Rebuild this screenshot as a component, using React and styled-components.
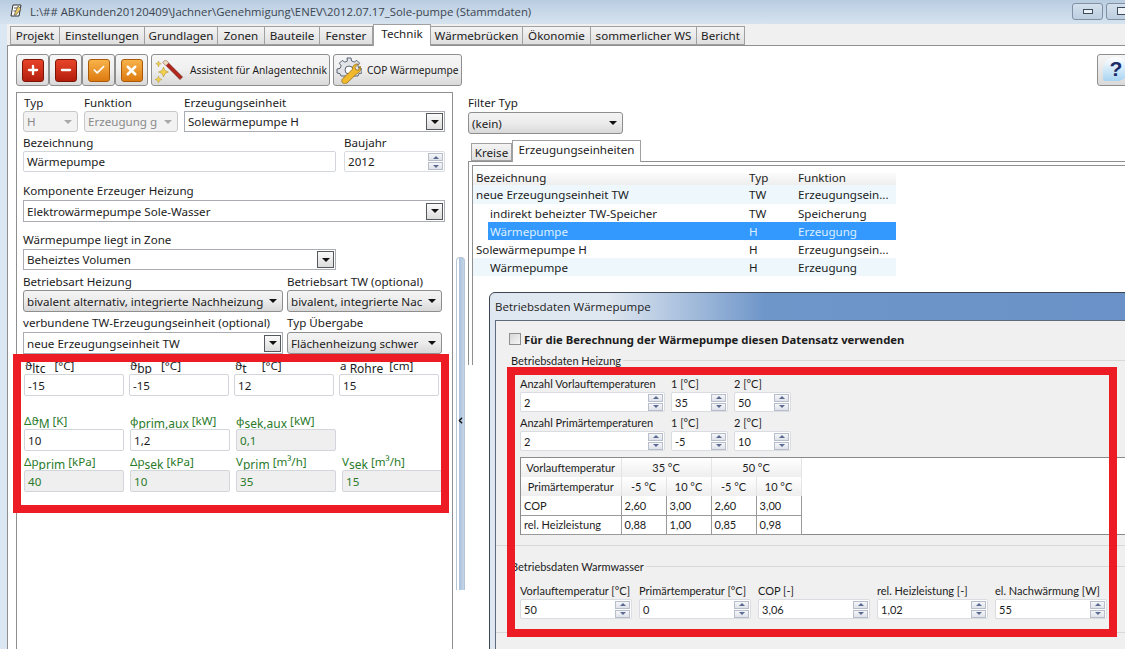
import React from "react";
import styled, { createGlobalStyle } from "styled-components";
import { Plus, Minus, Check, X, ChevronLeft } from "lucide-react";

const GlobalStyle = createGlobalStyle`
  html, body {
    margin: 0;
    padding: 0;
    background: #fff;
  }
  * {
    box-sizing: border-box;
  }
`;

const Screen = styled.div`
  width: 1125px;
  height: 649px;
  position: relative;
  overflow: hidden;
  display: flex;
  flex-direction: column;
  background: #dbe7f3;
  color: #1c1c1c;
  font-family: "Noto Sans", "DejaVu Sans", sans-serif;
  font-size: 11.6px;
`;

const TitleBar = styled.div`
  height: 24px;
  flex: none;
  display: flex;
  align-items: center;
  padding: 0 0 2px 10px;
  gap: 8px;
  background: linear-gradient(#b9cde0, #d6e3ef);
  color: #3c4652;
  font-family: "Open Sans", sans-serif;
  font-size: 11.35px;
`;

const WindowButtons = styled.div`
  margin-left: auto;
  margin-right: -12px;
  display: flex;
  gap: 3px;
`;

const WindowButton = styled.div`
  width: 31px;
  height: 17px;
  display: flex;
  align-items: center;
  justify-content: center;
  border: 1px solid #8091a6;
  border-radius: 3px;
  background: linear-gradient(#d5e0ec, #bccee0);
`;

const WindowGlyph = styled.span`
  width: 10px;
  height: ${p => p.$h}px;
  border: 1px solid #3d4a5a;
  background: #eef3f8;
`;

const TabStrip = styled.div`
  height: 22px;
  flex: none;
  margin-left: 7px;
  padding-left: 3px;
  display: flex;
  align-items: flex-end;
  background: #f0f0f0;
  border-bottom: 1px solid #8f8f8f;
`;

const MainTab = styled.div`
  width: ${p => p.$w}px;
  height: ${p => (p.$active ? 22 : 19)}px;
  margin-bottom: ${p => (p.$active ? -1 : 0)}px;
  display: flex;
  align-items: center;
  justify-content: center;
  border: 1px solid #a0a0a0;
  border-bottom: ${p => (p.$active ? "none" : "1px solid #a0a0a0")};
  border-left-width: ${p => (p.$active ? 1 : 0)}px;
  background: ${p => (p.$active ? "#fff" : "linear-gradient(#f4f4f4, #dfdfdf)")};
  padding-bottom: ${p => (p.$active ? 4 : 0)}px;
  position: relative;
  z-index: ${p => (p.$active ? 1 : 0)};

  &:first-child {
    border-left-width: 1px;
  }
`;

const Page = styled.div`
  flex: 1;
  min-height: 0;
  margin-left: 7px;
  padding-top: 8px;
  background: #fff;
  border-left: 1px solid #8f8f8f;
`;

const Toolbar = styled.div`
  height: 32px;
  padding-left: 8px;
  display: flex;
  align-items: stretch;
`;

const ToolButton = styled.div`
  width: ${p => p.$w}px;
  margin-left: ${p => p.$push || 0}px;
  flex: none;
  display: flex;
  align-items: center;
  justify-content: ${p => (p.$center ? "center" : "flex-start")};
  gap: 5px;
  padding-left: ${p => (p.$center ? 0 : 2)}px;
  border: 1px solid #8e8e8e;
  border-radius: 3px;
  background: linear-gradient(#f6f6f6, #f0f0f0 45%, #d9d9d9);
  font-size: 10.2px;
  white-space: nowrap;

  svg {
    flex: none;
  }
`;

const IconTile = styled.span`
  width: 22px;
  height: 23px;
  display: flex;
  align-items: center;
  justify-content: center;
  border-radius: 3px;
  color: #fff;
  border: 1px solid ${p => (p.$tone === "red" ? "#7c1408" : "#a85a08")};
  background: ${p =>
    p.$tone === "red"
      ? "linear-gradient(#e8452a, #b31d0c)"
      : "linear-gradient(#f7b34a, #dd7a10)"};
`;

const Body = styled.div`
  display: flex;
  height: 600px;
  margin-top: 6px;
  padding-left: 8px;
`;

const LeftPanel = styled.div`
  width: 437px;
  flex: none;
  padding: 3px 0 0 6px;
  border: 1px solid #8f8f8f;
  border-bottom: none;
`;

const Splitter = styled.div`
  width: 9px;
  height: 333px;
  flex: none;
  margin: 165px 0 0 3px;
  padding-top: 158px;
  border: 1px solid #b7c6d6;
  border-bottom: none;
  border-radius: 4px 4px 0 0;
  background: linear-gradient(to right, #fff 30%, #a9c2dc 30%, #c5d6e8);

  svg {
    display: block;
    margin-left: -1px;
  }
`;

const RightPanel = styled.div`
  flex: 1;
  min-width: 0;
  margin-left: 3px;
  padding-top: 4px;
`;

const Row = styled.div`
  display: flex;
  margin-top: ${p => p.$top || 0}px;
  padding-left: ${p => p.$left || 0}px;
  gap: ${p => p.$gap ?? 6}px;
`;

const Field = styled.div`
  width: ${p => p.$w}px;
  flex: none;
  display: flex;
  flex-direction: column;
`;

const Label = styled.div`
  height: ${p => p.$h || 15}px;
  line-height: ${p => (p.$h || 15) - 2}px;
  padding-left: ${p => p.$pad || 0}px;
  white-space: nowrap;
  color: ${p => (p.$green ? "#2a7a2a" : "inherit")};

  sub {
    font-size: 12px;
    line-height: 0;
    vertical-align: -3px;
  }
`;

const Control = styled.div`
  height: ${p => p.$h || 22}px;
  display: flex;
  align-items: center;
  overflow: hidden;
  white-space: nowrap;
  padding-left: 3px;
`;

const ComboBox = styled(Control)`
  background: #fff;
  border: 1px solid #a9adb3;
  justify-content: space-between;
`;

const ArrowBox = styled.span`
  width: 17px;
  height: 17px;
  margin-right: 1px;
  flex: none;
  display: flex;
  align-items: center;
  justify-content: center;
  border: 1px solid #55585c;
  background: linear-gradient(#fafafa, #dcdcdc);
`;

const Caret = styled.span`
  width: 0;
  height: 0;
  flex: none;
  border-left: 4px solid transparent;
  border-right: 4px solid transparent;
  border-top: 4px solid ${p => p.$color || "#111"};
`;

const FlatSelect = styled(Control)`
  border: 1px solid #8e8e8e;
  border-radius: 3px;
  background: linear-gradient(#f4f4f4, #ececec 50%, #d8d8d8);
  justify-content: space-between;
  padding-right: 5px;
`;

const DisabledSelect = styled(Control)`
  border: 1px solid #c8c8c8;
  border-radius: 3px;
  background: #f2f2f2;
  color: #8a8a8a;
  justify-content: space-between;
  padding-right: 5px;
`;

const SelectText = styled.span`
  min-width: 0;
`;

const TextBox = styled(Control)`
  background: ${p => (p.$off ? "#efefef" : "#fff")};
  color: ${p => (p.$off ? "#2a7a2a" : "inherit")};
  border: 1px solid #d2d6db;
  border-radius: 2px;
`;

const SpinBox = styled(TextBox)`
  justify-content: space-between;
  border-color: #d9dce1;
  padding-right: 1px;
`;

const SpinStack = styled.span`
  width: 15px;
  height: 100%;
  flex: none;
  display: flex;
  flex-direction: column;
  justify-content: center;
  gap: 1px;
`;

const SpinPart = styled.span`
  height: 8px;
  display: flex;
  align-items: center;
  justify-content: center;
  border: 1px solid #b8bdca;
  background: linear-gradient(#f5f6fa, #dfe2ea);
`;

const SpinArrow = styled.span`
  width: 0;
  height: 0;
  border-left: 3px solid transparent;
  border-right: 3px solid transparent;
  border-bottom: ${p => (p.$up ? "3px solid #5a6a90" : "none")};
  border-top: ${p => (p.$up ? "none" : "3px solid #5a6a90")};
`;

const TabRow = styled.div`
  height: 21px;
  margin-top: 6px;
  padding-left: 3px;
  display: flex;
  align-items: flex-end;
`;

const PaneTab = styled.div`
  width: ${p => p.$w}px;
  height: ${p => (p.$active ? 22 : 18)}px;
  margin-bottom: ${p => (p.$active ? -1 : 0)}px;
  display: flex;
  align-items: center;
  justify-content: center;
  padding-bottom: ${p => (p.$active ? 4 : 0)}px;
  border: 1px solid #a0a0a0;
  border-bottom: ${p => (p.$active ? "none" : "1px solid #a0a0a0")};
  background: ${p => (p.$active ? "#fff" : "linear-gradient(#f4f4f4, #dfdfdf)")};
  position: relative;
`;

const Pane = styled.div`
  padding: 3px 0 0 3px;
  border-top: 1px solid #8f8f8f;
  border-left: 1px solid #8f8f8f;
`;

const ListBox = styled.div`
  height: 200px;
  padding-top: 3px;
  border-top: 1px solid #8f8f8f;
  border-left: 1px solid #8f8f8f;
`;

const ListGrid = styled.div`
  width: 423px;
  height: ${p => p.$h}px;
  display: grid;
  grid-template-columns: 273px 49px 1fr;
  align-items: center;
  white-space: nowrap;
`;

const ListHeader = styled(ListGrid)`
  background: linear-gradient(#fff 25%, #fbfbfb 26%, #eeeeee);
`;

const ListRow = styled(ListGrid)`
  background-color: ${p => (p.$alt ? "#eef8fc" : "#fff")};
  color: ${p => (p.$selected ? "#dcefff" : "inherit")};
  background-image: ${p =>
    p.$selected
      ? "linear-gradient(to right, transparent 15px, #3399ff 15px)"
      : "none"};
`;

const NameCell = styled.span`
  padding-left: ${p => (p.$nested ? 17 : 3)}px;
`;

const TextCell = styled.span`
  padding-left: 3px;
`;

const Dialog = styled.div`
  position: absolute;
  left: 489px;
  top: 292px;
  right: -20px;
  bottom: -20px;
  display: flex;
  flex-direction: column;
  padding: 0 0 0 5px;
  border: 1px solid #3c4654;
  border-radius: 6px 6px 0 0;
  background: linear-gradient(to right, #dfe7f0 18%, #6f96c9 42%, #6a92c8);
`;

const DialogTitle = styled.div`
  height: 27px;
  flex: none;
  display: flex;
  align-items: center;
  font-family: "Open Sans", sans-serif;
  font-size: 11.5px;
`;

const DialogBody = styled.div`
  flex: 1;
  padding: 12px 0 0 13px;
  background: #f0f0f0;
  border: 1px solid #5f6b7a;
  border-right: none;
  font-family: "Lato", "Open Sans", sans-serif;
  font-size: 11px;
`;

const CheckRow = styled.div`
  height: 12px;
  display: flex;
  align-items: center;
  gap: 3px;
  font-family: "Noto Sans", sans-serif;
  font-weight: 700;
  font-size: 11.3px;
`;

const CheckSquare = styled.span`
  width: 12px;
  height: 12px;
  border: 1px solid #8e8f8f;
  background: linear-gradient(135deg, #d8d8d8, #f6f6f6);
`;

const GroupTitle = styled.div`
  height: 15px;
  margin: ${p => p.$top}px 0 0 ${p => p.$left || 2}px;
  display: flex;
  align-items: center;
  gap: 2px;
  white-space: nowrap;

  &::after {
    content: "";
    flex: 1;
    height: 1px;
    background: #d8d8d8;
  }
`;

const DialogRows = styled.div`
  padding-left: 11px;
`;

const TableArea = styled.div`
  height: 78px;
  margin: 6px 0 0 11px;
  background: linear-gradient(to right, #fff 604px, #f0f0f0 604px);
  border-top: 1px solid #8a8a8a;
  border-left: 1px solid #8a8a8a;
  border-bottom: 1px solid #8a8a8a;
`;

const Table = styled.table`
  border-collapse: collapse;
  table-layout: fixed;
  width: 280px;
`;

const HeadCell = styled.th`
  height: 19px;
  padding: 0;
  font-weight: 400;
  text-align: center;
  background: linear-gradient(#ffffff, #eeeeee);
  border-right: 1px solid #e4e4e4;
  overflow: hidden;
  white-space: nowrap;
`;

const DataCell = styled.td`
  height: 19px;
  padding: 0 0 0 3px;
  border-right: 1px solid #9a9a9a;
  border-bottom: 1px solid #9a9a9a;
  white-space: nowrap;
  overflow: hidden;
`;

const Separator = styled.div`
  height: 1px;
  margin-top: ${p => p.$top}px;
  margin-left: -13px;
  background: #d8d8d8;
`;

const Callout = styled.div`
  position: absolute;
  left: ${p => p.$x}px;
  top: ${p => p.$y}px;
  width: ${p => p.$w}px;
  height: ${p => p.$h}px;
  border: 8px solid #ed1c24;
  pointer-events: none;
`;

const HelpWrap = styled.div`
  position: absolute;
  left: 1097px;
  top: 54px;
  width: 40px;
  height: 32px;
  padding: 2px 0 0 5px;
  border: 1px solid #8e8e8e;
  border-radius: 3px;
  background: linear-gradient(#f6f6f6, #d9d9d9);
`;

const HelpBubble = styled.div`
  width: 26px;
  height: 24px;
  border-radius: 50% 50% 50% 10%;
  background: linear-gradient(#fff, #a8d4f2);
  color: #1a2a66;
  font-family: "Liberation Sans", sans-serif;
  font-size: 21px;
  font-weight: 700;
  line-height: 24px;
  text-align: center;
`;

const mainTabs = [
  ["Projekt", 50],
  ["Einstellungen", 85],
  ["Grundlagen", 73],
  ["Zonen", 47],
  ["Bauteile", 55],
  ["Fenster", 53],
  ["Technik", 58, true],
  ["Wärmebrücken", 92],
  ["Ökonomie", 68],
  ["sommerlicher WS", 106],
  ["Bericht", 48],
];

const listRows = [
  { name: "neue Erzeugungseinheit TW", typ: "TW", fn: "Erzeugungsein...", alt: true, h: 19 },
  { name: "indirekt beheizter TW-Speicher", typ: "TW", fn: "Speicherung", nested: true },
  { name: "Wärmepumpe", typ: "H", fn: "Erzeugung", nested: true, selected: true },
  { name: "Solewärmepumpe H", typ: "H", fn: "Erzeugungsein..." },
  { name: "Wärmepumpe", typ: "H", fn: "Erzeugung", nested: true, alt: true },
];

const NotepadIcon = () => (
  <svg width="12" height="14" viewBox="0 0 12 14">
    <path d="M3 1h8L9 12H1z" fill="#fff" stroke="#333" />
    <path d="M4 4l5 0M3.500 7l5 0" stroke="#555" />
    <path d="M8 2l3 3-5 6-2 0z" fill="#e8c860" stroke="#444" strokeWidth=".6" />
  </svg>
);

const WandIcon = () => (
  <svg width="31" height="26" viewBox="0 0 30 26">
    <path d="M11 3l17 17-2.500 2.500L8.500 5.500z" fill="#b3261b" stroke="#5a1a10" strokeWidth=".6" />
    <path d="M8.500 5.500L11 3l3 3-2.500 2.500z" fill="#e8e0c0" />
    <path d="M9 10l1.500 3.500L14 15l-3.500 1.500L9 20l-1.500-3.500L4 15l3.500-1.500z" fill="#f3d14e" stroke="#a88a20" strokeWidth=".5" />
    <path d="M4 19l1 2.500 2.500 1-2.500 1L4 26l-1-2.500-2.500-1 2.500-1z" fill="#f3d14e" stroke="#a88a20" strokeWidth=".4" />
    <path d="M4 4l.8 2 2 .8-2 .8L4 10l-.8-2.400-2-.8 2-.8z" fill="#f3d14e" stroke="#a88a20" strokeWidth=".4" />
  </svg>
);

const GearWrenchIcon = () => (
  <svg width="26" height="28" viewBox="0 0 26 28">
    <path
      d="M11 2h4l.6 3 2.600 1.100 2.600-1.700 2.800 2.800-1.700 2.600L23 12.400l3 .6v4l-3 .6-1 2.400H5l-1-2.400-3-.6v-4l3-.6 1.100-2.600-1.700-2.600 2.800-2.800 2.600 1.700L11.400 5z"
      fill="#e2e4e8"
      stroke="#5b6474"
    />
    <circle cx="13" cy="14" r="4" fill="#fff" stroke="#5b6474" />
    <path
      d="M24 10c1.500 3 .5 6.500-3 7.500L11 27c-1.500 1.200-3.500 1-4.500-.2-1.200-1.300-1-3 .3-4.300l9.500-9c-.3-3.500 2.500-6 6-5.500l-3.300 3.300 1 2.500 2.500.5z"
      fill="#f0b82c"
      stroke="#8a6410"
      strokeWidth=".7"
    />
  </svg>
);

const Combo = ({ h, children }) => (
  <ComboBox $h={h}>
    <SelectText>{children}</SelectText>
    <ArrowBox>
      <Caret />
    </ArrowBox>
  </ComboBox>
);

const Flat = ({ children }) => (
  <FlatSelect>
    <SelectText>{children}</SelectText>
    <Caret />
  </FlatSelect>
);

const Disabled = ({ children }) => (
  <DisabledSelect $h={21}>
    <SelectText>{children}</SelectText>
    <Caret $color="#a8a8a8" />
  </DisabledSelect>
);

const Spin = ({ value, h = 20 }) => (
  <SpinBox $h={h}>
    {value}
    <SpinStack>
      <SpinPart>
        <SpinArrow $up />
      </SpinPart>
      <SpinPart>
        <SpinArrow />
      </SpinPart>
    </SpinStack>
  </SpinBox>
);

const LeftForm = () => (
  <LeftPanel>
    <Row>
      <Field $w={55}>
        <Label $pad={1}>Typ</Label>
        <Disabled>H</Disabled>
      </Field>
      <Field $w={94}>
        <Label>Funktion</Label>
        <Disabled>Erzeugung g</Disabled>
      </Field>
      <Field $w={261}>
        <Label>Erzeugungseinheit</Label>
        <Combo h={21}>Solewärmepumpe H</Combo>
      </Field>
    </Row>
    <Row $top={4} $gap={8}>
      <Field $w={313}>
        <Label>Bezeichnung</Label>
        <TextBox $h={21}>Wärmepumpe</TextBox>
      </Field>
      <Field $w={101}>
        <Label>Baujahr</Label>
        <Spin value="2012" h={21} />
      </Field>
    </Row>
    <Row $top={12}>
      <Field $w={422}>
        <Label $h={16}>Komponente Erzeuger Heizung</Label>
        <Combo>Elektrowärmepumpe Sole-Wasser</Combo>
      </Field>
    </Row>
    <Row $top={11}>
      <Field $w={313}>
        <Label $h={16}>Wärmepumpe liegt in Zone</Label>
        <Combo h={21}>Beheiztes Volumen</Combo>
      </Field>
    </Row>
    <Row $top={5} $gap={4}>
      <Field $w={260}>
        <Label>Betriebsart Heizung</Label>
        <Flat>bivalent alternativ, integrierte Nachheizung</Flat>
      </Field>
      <Field $w={155}>
        <Label>Betriebsart TW (optional)</Label>
        <Flat>bivalent, integrierte Nac</Flat>
      </Field>
    </Row>
    <Row $top={4} $gap={4}>
      <Field $w={260}>
        <Label $h={16}>verbundene TW-Erzeugungseinheit (optional)</Label>
        <Combo>neue Erzeugungseinheit TW</Combo>
      </Field>
      <Field $w={155}>
        <Label $h={16}>Typ Übergabe</Label>
        <Flat>Flächenheizung schwer</Flat>
      </Field>
    </Row>
    <Row $top={6} $gap={5} $left={1}>
      <Field $w={100}>
        <Label $h={14} $pad={1}>ϑ<sub>ltc</sub>&nbsp;&nbsp; [°C]</Label>
        <TextBox>-15</TextBox>
      </Field>
      <Field $w={100}>
        <Label $h={14} $pad={1}>ϑ<sub>bp</sub>&nbsp;&nbsp; [°C]</Label>
        <TextBox>-15</TextBox>
      </Field>
      <Field $w={100}>
        <Label $h={14} $pad={1}>ϑ<sub>t</sub>&nbsp;&nbsp;&nbsp;&nbsp; [°C]</Label>
        <TextBox>12</TextBox>
      </Field>
      <Field $w={100}>
        <Label $h={14} $pad={1}>a<sub> Rohre</sub>&nbsp; [cm]</Label>
        <TextBox>15</TextBox>
      </Field>
    </Row>
    <Row $top={18} $left={1}>
      <Field $w={100}>
        <Label $green>Δϑ<sub>M</sub> [K]</Label>
        <TextBox>10</TextBox>
      </Field>
      <Field $w={100}>
        <Label $green>ϕ<sub>prim,aux</sub> [kW]</Label>
        <TextBox>1,2</TextBox>
      </Field>
      <Field $w={100}>
        <Label $green>ϕ<sub>sek,aux</sub> [kW]</Label>
        <TextBox $off>0,1</TextBox>
      </Field>
    </Row>
    <Row $top={4} $left={1}>
      <Field $w={100}>
        <Label $green>Δp<sub>prim</sub> [kPa]</Label>
        <TextBox $off>40</TextBox>
      </Field>
      <Field $w={100}>
        <Label $green>Δp<sub>sek</sub> [kPa]</Label>
        <TextBox $off>10</TextBox>
      </Field>
      <Field $w={100}>
        <Label $green>V<sub>prim</sub> [m³/h]</Label>
        <TextBox $off>35</TextBox>
      </Field>
      <Field $w={100}>
        <Label $green>V<sub>sek</sub> [m³/h]</Label>
        <TextBox $off>15</TextBox>
      </Field>
    </Row>
  </LeftPanel>
);

const UnitList = () => (
  <ListBox>
    <ListHeader $h={16}>
      <NameCell>Bezeichnung</NameCell>
      <TextCell>Typ</TextCell>
      <TextCell>Funktion</TextCell>
    </ListHeader>
    {listRows.map((row, i) => (
      <ListRow key={i} $h={row.h || 18} $alt={row.alt} $selected={row.selected}>
        <NameCell $nested={row.nested}>{row.name}</NameCell>
        <TextCell>{row.typ}</TextCell>
        <TextCell>{row.fn}</TextCell>
      </ListRow>
    ))}
  </ListBox>
);

const HeatTable = () => (
  <TableArea>
    <Table>
      <colgroup>
        <col width="100" />
        <col width="45" />
        <col width="45" />
        <col width="45" />
        <col width="45" />
      </colgroup>
      <tbody>
        <tr>
          <HeadCell>Vorlauftemperatur</HeadCell>
          <HeadCell colSpan={2}>35 °C</HeadCell>
          <HeadCell colSpan={2}>50 °C</HeadCell>
        </tr>
        <tr>
          <HeadCell>Primärtemperatur</HeadCell>
          <HeadCell>-5 °C</HeadCell>
          <HeadCell>10 °C</HeadCell>
          <HeadCell>-5 °C</HeadCell>
          <HeadCell>10 °C</HeadCell>
        </tr>
        <tr>
          <DataCell>COP</DataCell>
          <DataCell>2,60</DataCell>
          <DataCell>3,00</DataCell>
          <DataCell>2,60</DataCell>
          <DataCell>3,00</DataCell>
        </tr>
        <tr>
          <DataCell>rel. Heizleistung</DataCell>
          <DataCell>0,88</DataCell>
          <DataCell>1,00</DataCell>
          <DataCell>0,85</DataCell>
          <DataCell>0,98</DataCell>
        </tr>
      </tbody>
    </Table>
  </TableArea>
);

const HeatPumpDialog = () => (
  <Dialog>
    <DialogTitle>Betriebsdaten Wärmepumpe</DialogTitle>
    <DialogBody>
      <CheckRow>
        <CheckSquare />
        Für die Berechnung der Wärmepumpe diesen Datensatz verwenden
      </CheckRow>
      <GroupTitle $top={8}>Betriebsdaten Heizung</GroupTitle>
      <DialogRows>
        <Row $top={9}>
          <Field $w={145}>
            <Label>Anzahl Vorlauftemperaturen</Label>
            <Spin value="2" />
          </Field>
          <Field $w={57}>
            <Label>1 [°C]</Label>
            <Spin value="35" />
          </Field>
          <Field $w={57}>
            <Label>2 [°C]</Label>
            <Spin value="50" />
          </Field>
        </Row>
        <Row $top={4}>
          <Field $w={145}>
            <Label>Anzahl Primärtemperaturen</Label>
            <Spin value="2" />
          </Field>
          <Field $w={57}>
            <Label>1 [°C]</Label>
            <Spin value="-5" />
          </Field>
          <Field $w={57}>
            <Label>2 [°C]</Label>
            <Spin value="10" />
          </Field>
        </Row>
      </DialogRows>
      <HeatTable />
      <Separator $top={10} />
      <GroupTitle $top={13} $left={0}>Betriebsdaten Warmwasser</GroupTitle>
      <DialogRows>
        <Row $top={10} $gap={7}>
          <Field $w={112}>
            <Label>Vorlauftemperatur [°C]</Label>
            <Spin value="50" />
          </Field>
          <Field $w={112}>
            <Label>Primärtemperatur [°C]</Label>
            <Spin value="0" />
          </Field>
          <Field $w={112}>
            <Label>COP [-]</Label>
            <Spin value="3,06" />
          </Field>
          <Field $w={111}>
            <Label>rel. Heizleistung [-]</Label>
            <Spin value="1,02" />
          </Field>
          <Field $w={112}>
            <Label>el. Nachwärmung [W]</Label>
            <Spin value="55" />
          </Field>
        </Row>
      </DialogRows>
      <Separator $top={13} />
    </DialogBody>
  </Dialog>
);

const App = () => (
  <Screen>
    <GlobalStyle />
    <TitleBar>
      <NotepadIcon />
      L:\## ABKunden20120409\Jachner\Genehmigung\ENEV\2012.07.17_Sole-pumpe (Stammdaten)
      <WindowButtons>
        <WindowButton>
          <WindowGlyph $h={5} />
        </WindowButton>
        <WindowButton>
          <WindowGlyph $h={8} />
        </WindowButton>
      </WindowButtons>
    </TitleBar>
    <TabStrip>
      {mainTabs.map(([name, w, active]) => (
        <MainTab key={name} $w={w} $active={active}>
          {name}
        </MainTab>
      ))}
    </TabStrip>
    <Page>
      <Toolbar>
        <ToolButton $w={33} $center>
          <IconTile $tone="red"><Plus size={14} strokeWidth={4} /></IconTile>
        </ToolButton>
        <ToolButton $w={33} $center>
          <IconTile $tone="red"><Minus size={14} strokeWidth={4} /></IconTile>
        </ToolButton>
        <ToolButton $w={33} $center>
          <IconTile $tone="orange"><Check size={14} strokeWidth={3} /></IconTile>
        </ToolButton>
        <ToolButton $w={33} $center>
          <IconTile $tone="orange"><X size={15} strokeWidth={4} /></IconTile>
        </ToolButton>
        <ToolButton $w={179} $push={3}>
          <WandIcon />
          Assistent für Anlagentechnik
        </ToolButton>
        <ToolButton $w={129} $push={3}>
          <GearWrenchIcon />
          COP Wärmepumpe
        </ToolButton>
      </Toolbar>
      <Body>
        <LeftForm />
        <Splitter>
          <ChevronLeft size={9} strokeWidth={4} color="#111" />
        </Splitter>
        <RightPanel>
          <Label>Filter Typ</Label>
          <Row $top={1}>
            <Field $w={155}>
              <Flat>(kein)</Flat>
            </Field>
          </Row>
          <TabRow>
            <PaneTab $w={41}>Kreise</PaneTab>
            <PaneTab $w={129} $active>Erzeugungseinheiten</PaneTab>
          </TabRow>
          <Pane>
            <UnitList />
          </Pane>
        </RightPanel>
      </Body>
    </Page>
    <HelpWrap>
      <HelpBubble>?</HelpBubble>
    </HelpWrap>
    <HeatPumpDialog />
    <Callout $x={13} $y={354} $w={436} $h={159} />
    <Callout $x={507} $y={367} $w={610} $h={270} />
  </Screen>
);

export default App;
